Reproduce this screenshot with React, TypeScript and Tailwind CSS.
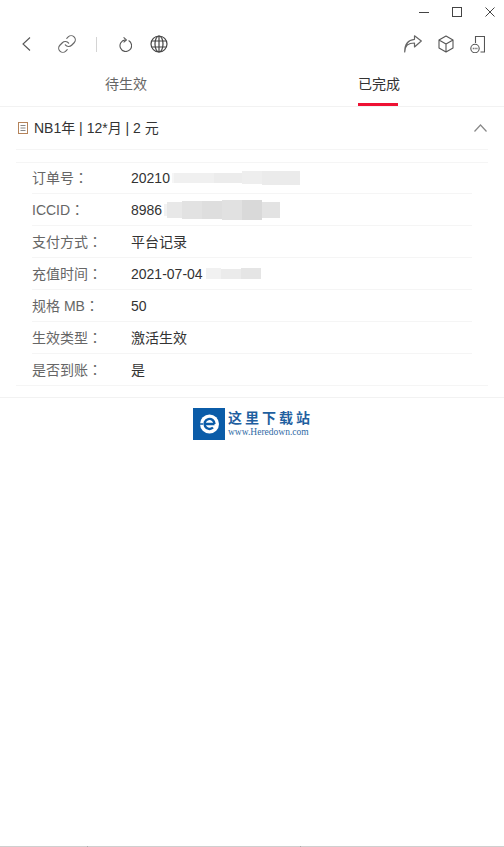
import { Link } from "lucide-react";

type Segment = { w: number; h: number; color: string };

const rows: { label: string; value: string; dot?: boolean; blur?: Segment[] }[] = [
  {
    label: "订单号",
    value: "20210",
    blur: [
      { w: 2, h: 10, color: "#f6f6f6" },
      { w: 40, h: 10, color: "#f0f0f0" },
      { w: 28, h: 10, color: "#ececec" },
      { w: 20, h: 13, color: "#eeeeee" },
      { w: 38, h: 14, color: "#ebebeb" },
    ],
  },
  {
    label: "ICCID",
    value: "8986",
    blur: [
      { w: 3, h: 12, color: "#f2f2f2" },
      { w: 15, h: 16, color: "#e8e8e8" },
      { w: 20, h: 18, color: "#e2e2e2" },
      { w: 20, h: 18, color: "#dedede" },
      { w: 20, h: 20, color: "#e1e1e1" },
      { w: 20, h: 20, color: "#d9d9d9" },
      { w: 18, h: 16, color: "#e3e3e3" },
    ],
  },
  { label: "支付方式", value: "平台记录" },
  {
    label: "充值时间",
    value: "2021-07-04",
    dot: true,
    blur: [
      { w: 15, h: 11, color: "#f1f1f1" },
      { w: 20, h: 10, color: "#ebebeb" },
      { w: 20, h: 11, color: "#e5e5e5" },
    ],
  },
  { label: "规格 MB", value: "50" },
  { label: "生效类型", value: "激活生效" },
  { label: "是否到账", value: "是" },
];

function WindowButtons() {
  return (
    <div className="flex h-[24px] items-center justify-end pr-[9px] text-[#444]">
      <svg width="10" height="10" viewBox="0 0 10 10" fill="none" stroke="currentColor">
        <path d="M0 5.5 H10" />
      </svg>
      <svg width="10" height="10" viewBox="0 0 10 10" fill="none" stroke="currentColor" className="ml-[23px]">
        <rect x="0.5" y="0.5" width="9" height="9" />
      </svg>
      <svg width="10" height="10" viewBox="0 0 10 10" fill="none" stroke="currentColor" className="ml-[23px]">
        <path d="M0.5 0.5 L9.5 9.5 M9.5 0.5 L0.5 9.5" />
      </svg>
    </div>
  );
}

function BackIcon() {
  return (
    <svg width="9" height="14" viewBox="0 0 9 14" fill="none" stroke="#555" strokeWidth="1.1">
      <path d="M8 0.5 L1 7 L8 13.5" />
    </svg>
  );
}

function RefreshIcon() {
  return (
    <svg width="13" height="15" viewBox="0 0 13 15" fill="none" stroke="#555" strokeWidth="1.1">
      <path d="M9.6 3.6 A5.8 5.8 0 1 1 6.3 2.9" />
      <path d="M4.6 0.4 L7.4 2.9 L4.6 5.4" />
    </svg>
  );
}

function GlobeIcon() {
  return (
    <svg width="18" height="18" viewBox="0 0 18 18" fill="none" stroke="#444" strokeWidth="1.2">
      <circle cx="9" cy="9" r="8" />
      <ellipse cx="9" cy="9" rx="4" ry="8" />
      <path d="M9 1 V17 M1.8 6 H16.2 M1.8 12 H16.2" />
    </svg>
  );
}

function ShareIcon() {
  return (
    <svg width="18" height="18" viewBox="0 0 18 18" fill="none" stroke="#666" strokeWidth="1.2">
      <path d="M0.7 17 C0.7 11 4 8 10.5 8 V12 L17.3 6 L10.5 0.8 V4.3 C4.5 4.8 0.7 9 0.7 17 Z" strokeLinejoin="round" />
    </svg>
  );
}

function BoxIcon() {
  return (
    <svg width="16" height="18" viewBox="0 0 16 18" fill="none" stroke="#555" strokeWidth="1.1">
      <path d="M8 1 L15 5 V13 L8 17 L1 13 V5 Z M1 5 L8 9 L15 5 M8 9 V17" strokeLinejoin="round" />
    </svg>
  );
}

function SessionIcon() {
  return (
    <svg width="15" height="17" viewBox="0 0 15 17" fill="none" stroke="#555" strokeWidth="1.1">
      <path d="M5.5 7 V0.5 H14.5 V16 H10.5" />
      <circle cx="5" cy="12.5" r="4.2" />
      <path d="M2.8 12.5 H3.8 M4.6 12.5 H5.6 M6.4 12.5 H7.4" strokeWidth="1.3" />
    </svg>
  );
}

function DocIcon() {
  return (
    <svg width="10" height="12" viewBox="0 0 10 12" fill="none" stroke="#b5835a" strokeWidth="1">
      <rect x="0.5" y="0.5" width="9" height="11" />
      <path d="M2.5 3.5 H7.5 M2.5 6 H7.5 M2.5 8.5 H7.5" stroke="#888" />
    </svg>
  );
}

function CollapseIcon() {
  return (
    <svg width="13" height="8" viewBox="0 0 13 8" fill="none" stroke="#888" strokeWidth="1.2">
      <path d="M0.5 7.5 L6.5 1 L12.5 7.5" />
    </svg>
  );
}

function Logo() {
  return (
    <div className="flex items-center gap-[3px]">
      <div className="flex h-[32px] w-[32px] items-center justify-center bg-[#0b5ca8]">
        <svg width="21" height="20" viewBox="0 0 21 20" fill="none">
          <circle cx="10.5" cy="10" r="9.5" fill="#fff" />
          <path d="M15.5 10 H5.5 M15.5 10 A5 5 0 1 0 14 13.5" stroke="#0b5ca8" strokeWidth="2.4" />
          <path d="M0 10 H4" stroke="#0b5ca8" strokeWidth="1.5" />
        </svg>
      </div>
      <div className="flex flex-col">
        <span className="font-['Noto_Sans_CJK_SC',serif] text-[14px] leading-[17px] font-bold tracking-[3px] text-[#1f5f9f]">这里下载站</span>
        <span className="font-['Liberation_Serif',serif] text-[9.5px] leading-[13px] text-[#2f6aa5]">www.Heredown.com</span>
      </div>
    </div>
  );
}

export default function App() {
  return (
    <div className="flex h-[847px] w-[504px] flex-col overflow-hidden bg-white font-['Liberation_Sans','Noto_Sans_CJK_SC',sans-serif] text-sm text-[#333]">
      <WindowButtons />

      {/* toolbar */}
      <div className="flex h-[40px] items-center justify-between pl-[22px] pr-[19px]">
        <div className="flex items-center">
          <BackIcon />
          <Link size={20} strokeWidth={1.4} color="#666" className="ml-[26px]" />
          <div className="ml-[19px] h-[15px] w-px bg-[#d4d4d4]" />
          <div className="ml-[22px]">
            <RefreshIcon />
          </div>
          <div className="ml-[18px]">
            <GlobeIcon />
          </div>
        </div>
        <div className="flex items-center">
          <ShareIcon />
          <div className="ml-[16px]">
            <BoxIcon />
          </div>
          <div className="ml-[16px]">
            <SessionIcon />
          </div>
        </div>
      </div>

      {/* tabs */}
      <div className="flex h-[43px] border-b border-[#f2f2f2]">
        <div className="flex flex-1 justify-center pt-[10px] text-[#666]">
          <span className="w-[42px] text-center leading-[20px]">待生效</span>
        </div>
        <div className="flex flex-1 justify-center pt-[10px]">
          <span className="h-[32px] w-[40px] border-b-[3px] border-[#ee1133] text-center leading-[20px] whitespace-nowrap">已完成</span>
        </div>
      </div>

      {/* order */}
      <div className="border-b border-[#f2f2f2] px-[16px] pb-[11px]">
        <div className="flex h-[43px] items-center justify-between border-b border-[#f5f5f5] pl-[2px] pr-[1px]">
          <div className="flex items-center gap-[6px]">
            <DocIcon />
            <span>NB1年 | 12*月 | 2 元</span>
          </div>
          <CollapseIcon />
        </div>
        <div className="mt-[12px] border-t border-b border-[#f5f5f5] px-[16px]">
          {rows.map((row, i) => (
            <div
              key={row.label}
              className={`flex items-center ${i === 0 ? "h-[31px] pb-px" : i === rows.length - 1 ? "h-[31px]" : "h-[32px]"} ${i < rows.length - 1 ? "border-b border-[#f5f5f5]" : ""}`}
            >
              <span className="w-[99px] text-[#666]">
                {row.label}
                <span className="font-['Noto_Sans_CJK_TC',sans-serif]">：</span>
              </span>
              <span>{row.value}</span>
              {row.dot && <span className="ml-[8px] w-0">.</span>}
              {row.blur && (
                <span className={`flex items-center ${row.dot ? "-ml-[5px]" : "ml-[2px]"}`}>
                  {row.blur.map((seg, j) => (
                    <span
                      key={j}
                      className="block blur-[0.5px]"
                      style={{ width: seg.w, height: seg.h, backgroundColor: seg.color }}
                    />
                  ))}
                </span>
              )}
            </div>
          ))}
        </div>
      </div>

      <div className="mt-[10px] flex justify-center pl-[2px]">
        <Logo />
      </div>

      {/* bottom edge */}
      <div className="mt-auto flex h-px">
        <div className="w-[87px] bg-[#cfcfcf]" />
        <div className="w-px bg-[#aaaaaa]" />
        <div className="w-[212px] bg-[#cfcfcf]" />
        <div className="w-px bg-[#aaaaaa]" />
        <div className="flex-1 bg-[#cfcfcf]" />
      </div>
    </div>
  );
}
